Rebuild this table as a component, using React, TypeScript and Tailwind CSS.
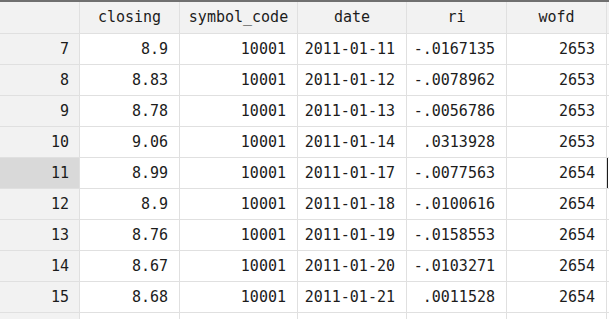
import React from 'react'

const columns = [
  { key: 'closing',     width: 'w-[100px]' },
  { key: 'symbol_code', width: 'w-[118px]' },
  { key: 'date',        width: 'w-[109px]' },
  { key: 'ri',          width: 'w-[100px]' },
  { key: 'wofd',        width: 'w-[100px]' },
]

const rows: [number, string, string, string, string, string][] = [
  [7,  '8.9',  '10001', '2011-01-11', '-.0167135', '2653'],
  [8,  '8.83', '10001', '2011-01-12', '-.0078962', '2653'],
  [9,  '8.78', '10001', '2011-01-13', '-.0056786', '2653'],
  [10, '9.06', '10001', '2011-01-14', '.0313928',  '2653'],
  [11, '8.99', '10001', '2011-01-17', '-.0077563', '2654'],
  [12, '8.9',  '10001', '2011-01-18', '-.0100616', '2654'],
  [13, '8.76', '10001', '2011-01-19', '-.0158553', '2654'],
  [14, '8.67', '10001', '2011-01-20', '-.0103271', '2654'],
  [15, '8.68', '10001', '2011-01-21', '.0011528',  '2654'],
  [16, '',     '',      '',           '',          ''],
]

export default function App() {
  const activeRow = 11

  return (
    <div className="w-[609px] h-[319px] overflow-hidden bg-white font-['DejaVu_Sans_Mono',monospace] text-[15px] text-[#1c1c1c]">
      <div className="border-t-2 border-[#707070]">
        {/* Header */}
        <div className="flex h-[32px] bg-[#f2f2f2] border-b border-[#e0e0e0]">
          <div className="w-[80px] shrink-0 border-r border-[#e0e0e0]" />
          {columns.map(c => (
            <div
              key={c.key}
              className={`${c.width} shrink-0 flex items-center justify-center border-r border-[#e0e0e0]`}
            >
              {c.key}
            </div>
          ))}
          <div className="flex-1" />
        </div>

        {/* Body */}
        {rows.map(([idx, ...vals]) => {
          const active = idx === activeRow
          return (
            <div key={idx} className="flex h-[31px] border-b border-[#e0e0e0]">
              <div
                className={`w-[80px] shrink-0 flex items-center justify-end pr-[10px] border-r border-[#e0e0e0] ${
                  active ? 'bg-[#d9d9d9]' : 'bg-[#f2f2f2]'
                }`}
              >
                {idx < 16 ? idx : ''}
              </div>
              {vals.map((v, i) => (
                <div
                  key={i}
                  className={`${columns[i].width} shrink-0 flex items-center justify-end pr-[11px] border-r border-[#e0e0e0]`}
                >
                  {v}
                </div>
              ))}
              {/* edge of the selected cell in the next column */}
              <div className={`flex-1 ${active ? 'border-l border-[#1c1c1c]' : ''}`} />
            </div>
          )
        })}
      </div>
    </div>
  )
}
